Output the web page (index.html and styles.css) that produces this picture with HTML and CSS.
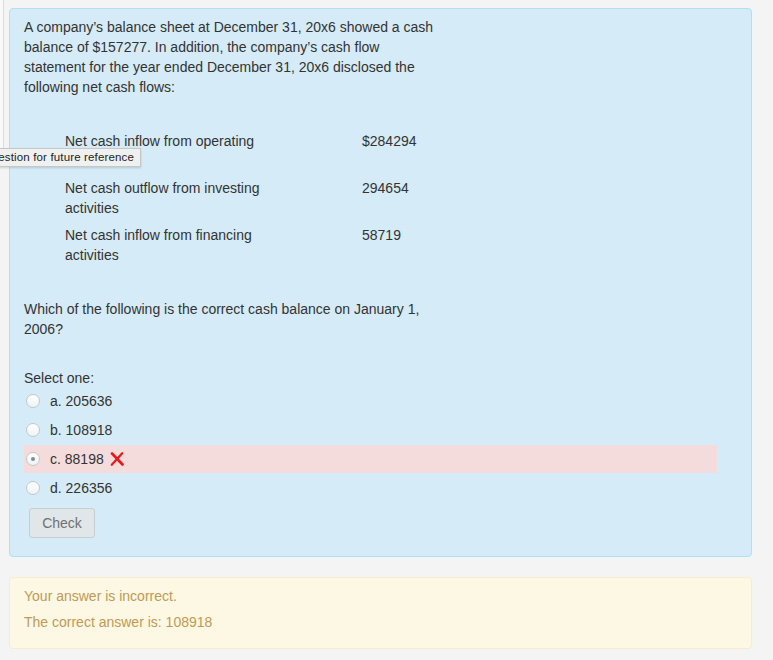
FILE: index.html
```html
<!DOCTYPE html>
<html>
<head>
<meta charset="utf-8">
<link rel="stylesheet" href="styles.css">
</head>
<body>
<div class="page">
  <div class="info"></div>
  <div class="content">
    <div class="formulation">
      <p class="qtext">A company’s balance sheet at December 31, 20x6 showed a cash balance of $157277. In addition, the company’s cash flow statement for the year ended December 31, 20x6 disclosed the following net cash flows:</p>
      <div class="flows">
        <div class="label">Net cash inflow from operating activities</div><div class="amt">$284294</div>
        <div class="label">Net cash outflow from investing activities</div><div class="amt">294654</div>
        <div class="label">Net cash inflow from financing activities</div><div class="amt">58719</div>
      </div>
      <p class="qtext q2">Which of the following is the correct cash balance on January 1, 2006?</p>
      <div class="prompt">Select one:</div>
      <div class="answers">
        <div class="opt"><span class="radio"></span><span>a. 205636</span></div>
        <div class="opt"><span class="radio"></span><span>b. 108918</span></div>
        <div class="opt incorrect"><span class="radio checked"></span><span>c. 88198</span>
          <svg class="xmark" width="14" height="14" viewBox="0 0 14 14"><path d="M2 1.5 L12.5 12.5" stroke="#e8191b" stroke-width="2.6" stroke-linecap="round"/><path d="M12.2 1.2 L1.8 12.8" stroke="#e8191b" stroke-width="2.2" stroke-linecap="round"/></svg>
        </div>
        <div class="opt"><span class="radio"></span><span>d. 226356</span></div>
      </div>
      <button class="check">Check</button>
    </div>
    <div class="feedback">
      <p>Your answer is incorrect.</p>
      <p>The correct answer is: 108918</p>
    </div>
  </div>
  <div class="tooltip">Flag this question for future reference</div>
</div>
</body>
</html>
```
FILE: styles.css
```css
html, body {
  margin: 0;
  padding: 0;
  background: #f4f4f4;
}
body {
  font-family: "Liberation Sans", Arial, sans-serif;
  font-size: 14px;
  line-height: 20px;
  color: #333;
  overflow: hidden;
}
.page {
  position: relative;
  display: flex;
  align-items: flex-start;
  width: 773px;
}
.info {
  width: 3px;
  height: 163px;
  background: #f9f9f9;
  border-right: 1px solid #dcdcdc;
  flex: none;
}
.content {
  margin-left: 5px;
  margin-top: 8px;
  width: 743px;
}
.formulation {
  background: #d5ebf7;
  border: 1px solid #ade3f1;
  border-radius: 4px;
  padding: 8px 14px 18px 14px;
}
.qtext {
  margin: 0;
  width: 415px;
}
.flows {
  display: grid;
  grid-template-columns: 297px auto;
  margin: 34px 0 0 41px;
}
.flows .label {
  width: 220px;
  padding-bottom: 7px;
}
.flows .amt {
  padding-bottom: 7px;
}
.q2 {
  margin-top: 27px;
}
.prompt {
  margin-top: 29px;
}
.answers {
  margin-top: -1px;
  margin-right: 20px;
}
.opt {
  display: flex;
  align-items: center;
  height: 28px;
  margin-bottom: 1px;
}
.opt.incorrect {
  background: #f4dcdc;
}
.radio {
  width: 12px;
  height: 12px;
  border-radius: 50%;
  border: 1px solid #c3c8cc;
  background: linear-gradient(#ffffff, #eef3f6);
  margin: 0 10px 0 2px;
  position: relative;
  flex: none;
}
.radio.checked::after {
  content: "";
  position: absolute;
  left: 4px;
  top: 4px;
  width: 4px;
  height: 4px;
  border-radius: 50%;
  background: #888;
}
.xmark {
  margin-left: 6px;
}
.check {
  margin: 6px 0 0 5px;
  width: 66px;
  height: 30px;
  font-family: "Liberation Sans", Arial, sans-serif;
  font-size: 14px;
  color: #707070;
  background: #e1e6e9;
  border: 1px solid #c8cdd1;
  border-radius: 3px;
  padding: 0;
  display: block;
}
.feedback {
  margin-top: 20px;
  background: #fcf8e3;
  border: 1px solid #faebcc;
  border-radius: 4px;
  padding: 8px 14px 16px 14px;
  color: #c29a56;
}
.feedback p {
  margin: 0;
}
.feedback p + p {
  margin-top: 6px;
}
.tooltip {
  position: absolute;
  top: 148px;
  right: 632px;
  height: 17px;
  line-height: 17px;
  padding: 0 6px;
  font-size: 11.5px;
  letter-spacing: 0.15px;
  color: #222;
  background: #eff1f1;
  border: 1px solid #c6c8c8;
  white-space: nowrap;
  box-shadow: 0 1px 2px rgba(0,0,0,0.15);
}
```
